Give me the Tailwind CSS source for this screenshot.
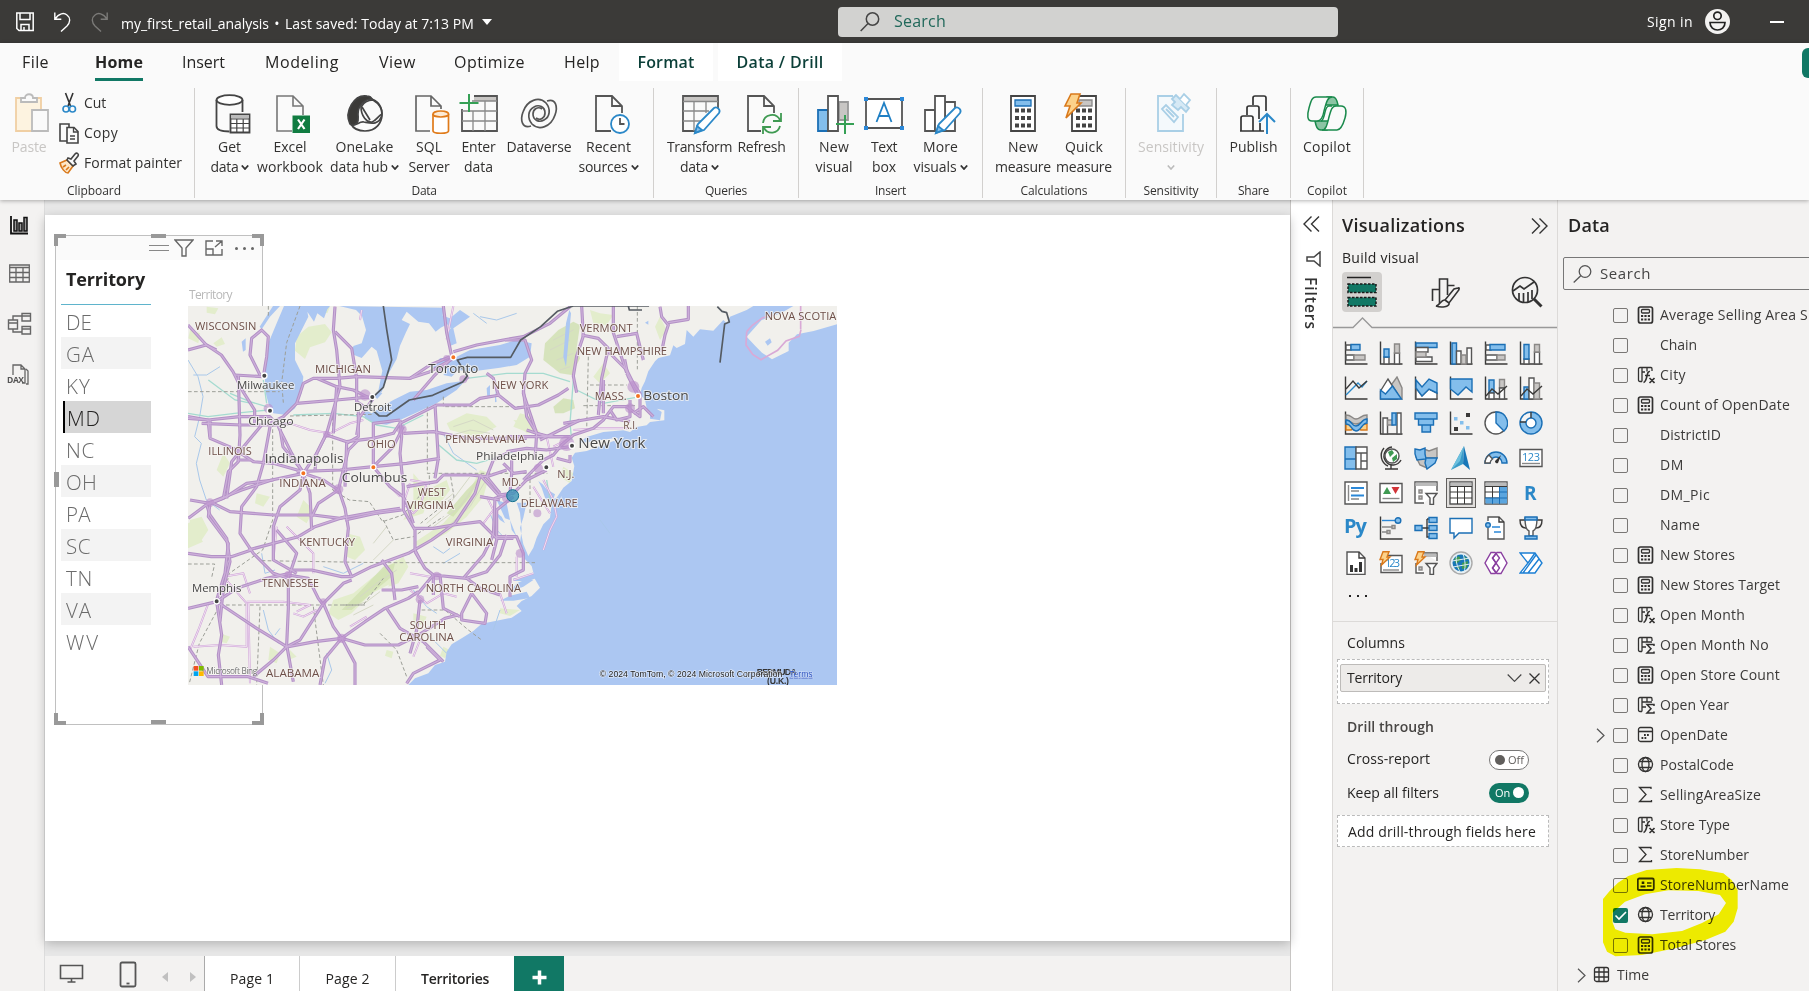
<!DOCTYPE html>
<html lang="en">
<head>
<meta charset="utf-8">
<title>my_first_retail_analysis</title>
<script src="https://cdn.jsdelivr.net/npm/@tailwindcss/browser@4"></script>
</head>
<body class="w-[1809px] h-[991px] overflow-hidden bg-[#f3f2f1] font-['Open_Sans','Noto_Sans',sans-serif] text-[#252423] text-sm whitespace-nowrap flex flex-col">

<!-- Title bar -->
<header class="h-[43px] shrink-0 bg-[#3b3a38] flex items-center text-white">
  <svg class="ml-4 w-[18px] h-[20px]" viewBox="0 0 18 20" fill="none" stroke="#fff" stroke-width="1.5"><path d="M.8 1h16.4v17.5H3L.8 16.5zM4 1v6.500h10V1M5 18.500v-6h8v6M8 15v3.500"/></svg>
  <svg class="ml-5 w-[17px] h-[20px]" viewBox="0 0 17 20" fill="none" stroke="#fff" stroke-width="1.4"><path d="M.8.5v6.700h6.500M1 7C5 1 10 .5 13 3c4 3 3 8 0 11l-6 5.500"/></svg>
  <svg class="ml-5 w-[17px] h-[20px]" viewBox="0 0 17 20" fill="none" stroke="#7b7a78" stroke-width="1.400"><path d="M16.200.5v6.700H9.700M16 7C12 1 7 .5 4 3C0 6 1 11 4 14l6 5.500"/></svg>
  <div class="ml-[13px] mt-1 flex items-center text-[14px]"><span data-w="148">my_first_retail_analysis</span><span class="w-4 text-center">•</span><span data-w="189">Last saved: Today at 7:13 PM</span></div>
  <svg class="ml-2 w-[10px] h-[6px]" viewBox="0 0 10 6"><path d="M0 0h10L5 6z" fill="#fff"/></svg>
  <div class="ml-[346px] w-[500px] h-[30px] rounded-sm bg-[#d2d2d0] flex items-center">
    <svg class="ml-[22px] w-[20px] h-[20px]" viewBox="0 0 20 20" fill="none" stroke="#444" stroke-width="1.500"><circle cx="12.500" cy="7" r="6.200"/><path d="M8 11.500.7 19"/></svg>
    <span class="ml-[14px] text-[16px] text-[#20685a]" data-w="52">Search</span>
  </div>
  <span class="ml-[309px] text-[14px]" data-w="46">Sign in</span>
  <svg class="ml-[12px] w-[25px] h-[25px]" viewBox="0 0 25 25"><circle cx="12.500" cy="12.500" r="12.500" fill="#f3f2f1"/><g fill="none" stroke="#222" stroke-width="1.700"><circle cx="12.500" cy="6.800" r="3.700"/><path d="M5 13.500h15c0 10-15 10-15 0z"/></g></svg>
  <div class="ml-[40px] w-[14px] h-[2px] bg-white"></div>
</header>

<!-- Ribbon -->
<section class="h-[157px] shrink-0 bg-[#fafafa] relative z-10 shadow-[0_1px_4px_rgba(0,0,0,0.3)] flex flex-col">
  <nav class="h-[45px] flex items-start text-[16px]">
    <div class="pl-[22px] w-[95px] h-[38px] leading-[39px]"><span data-w="27">File</span></div>
    <div class="w-[48px] h-[38px] leading-[39px] border-b-[3px] border-[#117865] font-bold"><span data-w="48">Home</span></div>
    <div class="pl-[39px] w-[122px] leading-[39px]"><span data-w="43">Insert</span></div>
    <div class="w-[114px] leading-[39px]"><span data-w="74">Modeling</span></div>
    <div class="w-[75px] leading-[39px]"><span data-w="37">View</span></div>
    <div class="w-[110px] leading-[39px]"><span data-w="71">Optimize</span></div>
    <div class="w-[55px] leading-[39px]"><span data-w="36">Help</span></div>
    <div class="w-[94px] h-[38px] leading-[39px] bg-white text-center font-semibold text-[#0b3f38]"><span data-w="57">Format</span></div>
    <div class="ml-[5px] w-[124px] h-[38px] leading-[39px] bg-white text-center font-semibold text-[#0b3f38]"><span data-w="87">Data / Drill</span></div>
    <div class="ml-auto mt-[5px] w-[7px] h-[30px] bg-[#117865] rounded-l-md"></div>
  </nav>
  <div class="h-[110px] flex text-[14px] leading-[20px] text-[#323130]">
    <!-- Clipboard -->
    <div class="w-[195px] border-r border-[#d2d0ce] flex flex-col">
      <div class="h-[96px] flex">
        <div class="w-[58px] flex flex-col items-center pt-[5px] text-[#c8c6c4]">
          <svg class="w-[40px] h-[44px]" viewBox="0 0 40 44" fill="none" stroke-width="1.800"><path d="M7 5h25v33H7z" stroke="#f0cfa3" fill="#fdf3e0"/><path d="M12 9V5h4c0-5 8-5 8 0h4v4z" stroke="#bbb" fill="#fafafa"/><path d="M23 17h16v21H23z" stroke="#bbb" fill="#fafafa"/></svg>
          <span data-w="35">Paste</span>
        </div>
        <div class="flex flex-col">
          <div class="h-[30px] flex items-center"><svg class="w-[22px] h-[22px]" viewBox="0 0 22 22" fill="none" stroke-width="1.600"><path d="M7.500 1l5 13M15 1l-5 13" stroke="#333"/><g stroke="#2b88c8"><circle cx="8" cy="17" r="3"/><circle cx="14.500" cy="17" r="3"/></g></svg><span class="ml-1" data-w="22">Cut</span></div>
          <div class="h-[30px] flex items-center"><svg class="w-[22px] h-[22px]" viewBox="0 0 22 22" fill="none" stroke="#444" stroke-width="1.600"><path d="M9 19H2V2h9v3"/><path d="M9 5.500h7l4 4V21H9z" fill="#fafafa"/><path d="M15.500 5.500V10H20M12 14h5M12 17h5" stroke-width="1.300"/></svg><span class="ml-1" data-w="34">Copy</span></div>
          <div class="h-[30px] flex items-center"><svg class="w-[22px] h-[22px]" viewBox="0 0 22 22" fill="none" stroke-width="1.600"><path d="M2 11l7-3 6 6-5 7c-3 0-7-5-8-10z" stroke="#d9791b" fill="#fde7c8"/><path d="M5 15l3-2M8 18l3-3" stroke="#d9791b"/><path d="M9 8l6 6 3-2-2-3 4-5c1-2-1-4-3-2l-4 5-3-1z" stroke="#444" fill="#fafafa"/></svg><span class="ml-1" data-w="98">Format painter</span></div>
        </div>
      </div>
      <span class="pl-[67px] text-[12px] leading-[14px]"><span data-w="54">Clipboard</span></span>
    </div>
    <!-- Data -->
    <div class="w-[459px] border-r border-[#d2d0ce] flex flex-col items-center">
      <div class="h-[96px] w-full pl-[4px] flex pt-[5px]">
        <div class="w-[61px] flex flex-col items-center">
          <svg class="w-10 h-[44px] overflow-visible" viewBox="0 0 40 44" fill="none" stroke="#444" stroke-width="1.800"><ellipse cx="19.500" cy="7" rx="13" ry="4.800" fill="#fff"/><path d="M6.500 7v26c0 4 6 5.500 13 5.500M32.500 7v12"/><path d="M20.500 21.500h19v18h-19z" fill="#fff"/><path d="M21 22h18v3.500H21z" fill="#bbb" stroke="none"/><path d="M20.500 26h19M20.500 30.500h19M20.500 35h19M26.800 26v13.500M33.200 26v13.500" stroke-width="1.200"/></svg>
          <span data-w="23">Get</span><span class="flex items-center gap-[2px]"><span data-w="28">data</span><svg class="w-2 h-[5px]" viewBox="0 0 8 5"><path d="M.8.5 4 4 7.200.5" fill="none" stroke="#333" stroke-width="1.800"/></svg></span>
        </div>
        <div class="w-[60px] flex flex-col items-center">
          <svg class="w-10 h-[44px] overflow-visible" viewBox="0 0 40 44" fill="none" stroke="#777" stroke-width="1.600"><path d="M22 38H7V3h16l10 10v9M23 3v10h10" /><path d="M22.500 22.500h17.500v17.500H22.500z" fill="#107c41" stroke="none"/><path d="M28 26.500l6.500 9.500M34.500 26.500L28 36" stroke="#fff" stroke-width="2.200"/></svg>
          <span data-w="33">Excel</span><span data-w="66">workbook</span>
        </div>
        <div class="w-[89px] flex flex-col items-center">
          <svg class="w-10 h-[44px] overflow-visible" viewBox="0 0 40 44" fill="none" stroke="#444" stroke-width="1.700"><path d="M20.500 5C31 5 37 12 37 21s-6 17-17 17C12 38 8 35 6 31" fill="#fafafa"/><path d="M16 14C20 7 26 7 28 7c5 3 9 8 9 14-4 2-6 7-10 8-5 1-11-6-11-15z"/><path d="M17 14l8 13M6 32c6 1 8-4 13-3 6 1 15 4 18-7"/><path d="M5 31C-1 19 9 1 22 3c2 0 4 1 5 3-8 0-14 7-14 15 0 4 1 6-1 9-2 2-5 3-7 1z" fill="#3b3a38"/></svg>
          <span data-w="58">OneLake</span><span class="flex items-center gap-[3px]"><span data-w="58">data hub</span><svg class="w-2 h-[5px]" viewBox="0 0 8 5"><path d="M.8.5 4 4 7.200.5" fill="none" stroke="#333" stroke-width="1.800"/></svg></span>
        </div>
        <div class="w-[40px] flex flex-col items-center">
          <svg class="w-10 h-[44px] overflow-visible" viewBox="0 0 40 44" fill="none" stroke="#666" stroke-width="1.700"><path d="M21 38H7V3h15l10 10v3M22 3v10h10"/><g stroke="#e07b1a"><path d="M24 21v17c0 3 15.500 3 15.500 0V21" fill="#fff"/><ellipse cx="31.800" cy="21" rx="7.800" ry="3" fill="#fdebd5"/></g></svg>
          <span data-w="26">SQL</span><span data-w="41">Server</span>
        </div>
        <div class="w-[59px] flex flex-col items-center">
          <svg class="w-10 h-[44px] overflow-visible" viewBox="0 0 40 44" fill="none" stroke="#555" stroke-width="1.800"><path d="M3 16v22h35V3H15"/><path d="M15 4h22v4H15z" fill="#c8c6c4" stroke="none"/><path d="M13 8h25M3 18h35M3 28h35M14 18v20M26 8v30" stroke="#888" stroke-width="1.300"/><path d="M10 1v18M.5 10h19" stroke="#35a055" stroke-width="2"/></svg>
          <span data-w="34">Enter</span><span data-w="29">data</span>
        </div>
        <div class="w-[62px] flex flex-col items-center">
          <svg class="w-10 h-[44px] overflow-visible" viewBox="0 0 40 44" fill="none" stroke="#555" stroke-width="1.700"><path d="M12 33C3 36 1 27 4 19 8 7 20 3 27 10c5 6 4 14-2 17-5 3-11 0-11-6 0-5 5-8 9-5"/><path d="M28 8c9-3 11 6 8 14-4 12-16 16-23 9-5-6-4-14 2-17 5-3 11 0 11 6 0 5-5 8-9 5"/></svg>
          <span data-w="65">Dataverse</span>
        </div>
        <div class="w-[77px] flex flex-col items-center">
          <svg class="w-10 h-[44px] overflow-visible" viewBox="0 0 40 44" fill="none" stroke="#555" stroke-width="1.800"><path d="M22 38H7V3h16l10 10v7M23 3v10h10"/><circle cx="31" cy="31" r="9" fill="#fff" stroke="#2b88c8"/><path d="M31 25v6h4.500"/></svg>
          <span data-w="45">Recent</span><span class="flex items-center gap-[3px]"><span data-w="49">sources</span><svg class="w-2 h-[5px]" viewBox="0 0 8 5"><path d="M.8.5 4 4 7.200.5" fill="none" stroke="#333" stroke-width="1.800"/></svg></span>
        </div>
      </div>
      <span class="text-[12px] leading-[14px]" data-w="25">Data</span>
    </div>
    <!-- Queries -->
    <div class="w-[145px] border-r border-[#d2d0ce] flex flex-col items-center">
      <div class="h-[96px] w-full pl-[12px] flex pt-[5px]">
        <div class="w-[67px] flex flex-col items-center">
          <svg class="w-10 h-[44px] overflow-visible" viewBox="0 0 40 44" fill="none" stroke="#555" stroke-width="1.800"><path d="M15 38H3V3h35v12"/><path d="M4 4h33v4H4z" fill="#c8c6c4" stroke="none"/><path d="M3 8.500h35M3 18h26M3 28h18M14 8v30M26 8v12" stroke="#888" stroke-width="1.300"/><path d="M15 40l3-9 16-16c3-2 7 2 5 5L24 37z" fill="#fff" stroke="#2b88c8"/><path d="M15 40l2-7 5 4z" fill="#83beec" stroke="#2b88c8"/></svg>
          <span data-w="65">Transform</span><span class="flex items-center gap-[3px]"><span data-w="28">data</span><svg class="w-2 h-[5px]" viewBox="0 0 8 5"><path d="M.8.5 4 4 7.200.5" fill="none" stroke="#333" stroke-width="1.800"/></svg></span>
        </div>
        <div class="w-[57px] flex flex-col items-center">
          <svg class="w-10 h-[44px] overflow-visible" viewBox="0 0 40 44" fill="none" stroke="#555" stroke-width="1.800"><path d="M19 38H6V3h16l10 10v7M22 3v10h10"/><path d="M21 30c1-9 13-11 17-3M39 20v8h-8M38 33c-2 8-12 9-16 2M21 41v-7h8" stroke="#3f9a52"/></svg>
          <span data-w="48">Refresh</span>
        </div>
      </div>
      <span class="text-[12px] leading-[14px]" data-w="42">Queries</span>
    </div>
    <!-- Insert -->
    <div class="w-[184px] border-r border-[#d2d0ce] flex flex-col items-center">
      <div class="h-[96px] w-full pl-[8px] flex pt-[5px]">
        <div class="w-[54px] flex flex-col items-center">
          <svg class="w-10 h-[44px] overflow-visible" viewBox="0 0 40 44" fill="none" stroke="#555" stroke-width="1.800"><path d="M25 9h9v18h-9z" fill="#c8c6c4" stroke="#999"/><path d="M4 17h10v21H4z" fill="#83beec" stroke="#1b6fb5"/><path d="M14 3h10v35H14z" fill="#fff"/><path d="M31 22v19M22 31h18" stroke="#35a055" stroke-width="2"/></svg>
          <span data-w="30">New</span><span data-w="37">visual</span>
        </div>
        <div class="w-[46px] flex flex-col items-center">
          <svg class="w-10 h-[44px] overflow-visible" viewBox="0 0 40 44" fill="none" stroke="#555" stroke-width="1.800"><path d="M2 6h36v29H2z" fill="#fff"/><path d="M12.500 29 20 10l7.500 19M15 23h10" stroke="#1f7fc4"/><path d="M0 4h4v4H0zM36 4h4v4h-4zM0 33h4v4H0zM36 33h4v4h-4z" fill="#2b88d8" stroke="none"/></svg>
          <span data-w="26">Text</span><span data-w="24">box</span>
        </div>
        <div class="w-[67px] flex flex-col items-center">
          <svg class="w-10 h-[44px] overflow-visible" viewBox="0 0 40 44" fill="none" stroke="#555" stroke-width="1.800"><path d="M4 17h10v21H4zM24 9h10v29H24z" fill="#fff"/><path d="M14 3h10v35H14z" fill="#fff"/><path d="M15 40l3-9 16-16c3-2 7 2 5 5L24 37z" fill="#fff" stroke="#2b88c8"/><path d="M15 40l2-7 5 4z" fill="#83beec" stroke="#2b88c8"/></svg>
          <span data-w="35">More</span><span class="flex items-center gap-[3px]"><span data-w="43">visuals</span><svg class="w-2 h-[5px]" viewBox="0 0 8 5"><path d="M.8.5 4 4 7.200.5" fill="none" stroke="#333" stroke-width="1.800"/></svg></span>
        </div>
      </div>
      <span class="text-[12px] leading-[14px]" data-w="31">Insert</span>
    </div>
    <!-- Calculations -->
    <div class="w-[143px] border-r border-[#d2d0ce] flex flex-col items-center">
      <div class="h-[96px] w-full pl-[10px] flex pt-[5px]">
        <div class="w-[60px] flex flex-col items-center">
          <svg class="w-10 h-[44px] overflow-visible" viewBox="0 0 40 44" fill="none" stroke="#444" stroke-width="1.800"><path d="M8 3h24v35H8z" fill="#fff"/><path d="M12 7h16v6H12z" fill="#83beec" stroke="#1b6fb5" stroke-width="1.300"/><path d="M12 17.500h16M12 25h16M12 32.500h16" stroke-width="4" stroke-dasharray="4 2"/></svg>
          <span data-w="30">New</span><span data-w="56">measure</span>
        </div>
        <div class="w-[62px] flex flex-col items-center">
          <svg class="w-10 h-[44px] overflow-visible" viewBox="0 0 40 44" fill="none" stroke="#444" stroke-width="1.800"><path d="M8 3h24v35H8z" fill="#fff"/><path d="M15 7h13v6H15z" fill="#c8c6c4" stroke="#888" stroke-width="1.300"/><path d="M12 17.500h16M12 25h16M12 32.500h16" stroke-width="4" stroke-dasharray="4 2"/><path d="M7 1h9l-3 9h4L2 25l4-12H1z" fill="#fcd28a" stroke="#d9791b" stroke-width="1.600"/></svg>
          <span data-w="38">Quick</span><span data-w="56">measure</span>
        </div>
      </div>
      <span class="text-[12px] leading-[14px]" data-w="67">Calculations</span>
    </div>
    <!-- Sensitivity -->
    <div class="w-[91px] border-r border-[#d2d0ce] flex flex-col items-center">
      <div class="h-[96px] flex flex-col items-center pt-[5px] text-[#c8c6c4]">
        <svg class="w-10 h-[44px] overflow-visible" viewBox="0 0 40 44" fill="none" stroke="#a9cfe6" stroke-width="1.800"><path d="M22 3H7v35h25V21" fill="#f4f9fc"/><path d="M11 16l4-4 12 12-4 5zM15 16l8 8"/><path d="M21 6l4-4 13 13-3 4-5-5-3 3-6-5 3-3z" fill="#d6e9f5"/><path d="M29 6l4-5 6 6-4 5" fill="#fff"/></svg>
        <span data-w="66">Sensitivity</span>
        <svg class="mt-[8px] w-2 h-[5px]" viewBox="0 0 8 5"><path d="M.8.5 4 4 7.200.5" fill="none" stroke="#bbb" stroke-width="1.600"/></svg>
      </div>
      <span class="text-[12px] leading-[14px]" data-w="55">Sensitivity</span>
    </div>
    <!-- Share -->
    <div class="w-[74px] border-r border-[#d2d0ce] flex flex-col items-center">
      <div class="h-[96px] flex flex-col items-center pt-[5px]">
        <svg class="w-10 h-[44px] overflow-visible" viewBox="0 0 40 44" fill="none" stroke="#333" stroke-width="1.700"><path d="M19 12V5c0-1.500.5-2 2-2h9c1.500 0 2 .5 2 2v13M13 22v-7c0-1.500.5-2 2-2h8c1.500 0 2 .5 2 2v11M7 38V25c0-1.500.5-2 2-2h8c1.500 0 2 .5 2 2v13M6 38h24M26 30v8"/><path d="M33 41V22M25 29l8-8 8 8" stroke="#2b88c8" stroke-width="2"/></svg>
        <span data-w="48">Publish</span>
      </div>
      <span class="text-[12px] leading-[14px]" data-w="31">Share</span>
    </div>
    <!-- Copilot -->
    <div class="w-[73px] border-r border-[#d2d0ce] flex flex-col items-center">
      <div class="h-[96px] flex flex-col items-center pt-[5px]">
        <svg class="w-10 h-[44px] overflow-visible" viewBox="0 0 40 44" fill="#fafafa" stroke="#1a8a4c" stroke-width="1.500"><path d="M20 4h6c3 0 4 3 5 8H18z" fill="#8cc4a4"/><path d="M20 37h-6c-4 0-5-4-6-9h13z" fill="#8cc4a4"/><path d="M9 4h16c-5 0-6 7-8 14-1 6-3 10-7 10H5c-5 0-5-6-3-13S5 4 9 4z"/><path d="M30 37H15c4 0 5-5 7-13 2-7 3-11 7-11h5c5 0 6 5 4 12s-4 12-8 12z"/><path d="M25 13h-3c-2 0-3 2-4 6-1 5-2 9-4 9"/></svg>
        <span data-w="48">Copilot</span>
      </div>
      <span class="text-[12px] leading-[14px]" data-w="40">Copilot</span>
    </div>
  </div>
</section>

<!-- Workspace -->
<main class="flex h-[791px] shrink-0">
  <!-- View switcher -->
  <aside class="w-[45px] shrink-0 border-r border-[#dcdcdc] pt-[15px] pl-[5px] flex flex-col">
    <svg class="w-[26px] h-[21px]" viewBox="0 0 26 21" fill="none" stroke="#111" stroke-width="1.500"><path d="M6 1v17.500h17" stroke-width="1.800"/><path d="M9 5h3v11H9zM14 8h3v8h-3zM19 2.500h3V16h-3z" fill="#999"/></svg>
    <svg class="mt-[27px] w-[26px] h-[21px]" viewBox="0 0 26 21" fill="none" stroke="#666" stroke-width="1.300"><path d="M4.700 2h19.600v17H4.700zM4.700 4.500h19.600M4.700 9.500h19.600M4.700 14.500h19.600M11 4.500V19M18 4.500V19"/></svg>
    <svg class="mt-[27px] w-[27px] h-[26px]" viewBox="0 0 27 26" fill="none" stroke="#666" stroke-width="1.400"><path d="M3.500 9h9v9h-9zM3.500 12h9M17 2.500h8.500v7.500H17zM17 5h8.500M17 15.500h8.500V23H17zM17 18h8.500M8 9V5h9M8 18v3h9"/></svg>
    <svg class="mt-[26px] w-[27px] h-[24px]" viewBox="0 0 27 24" fill="none" stroke="#666" stroke-width="1.300"><path d="M8 12V2h8l4 4v14h-3M16 2v4h4M21 6l2 2v13h-2"/><text x="2" y="20" font-size="8.500" font-weight="bold" fill="#555" stroke="none" textLength="17">DAX</text></svg>
  </aside>

  <div class="w-[1245px] shrink-0 flex flex-col bg-[#e7e7e7]">
    <!-- Report page -->
    <div class="mt-[15px] h-[726px] bg-white shadow-[0_3px_10px_rgba(0,0,0,0.22)] relative">
      <!-- Selected table visual -->
      <div class="absolute left-[10px] top-[20px] w-[208px] h-[490px] border border-[#c0c0c0] flex flex-col">
        <div class="h-[24px] bg-[#fafafa] flex items-center pl-[93px]">
          <div class="w-5 h-[6px] border-y border-[#888]"></div>
          <svg class="ml-[5px] w-5 h-[18px]" viewBox="0 0 20 18" fill="none" stroke="#666" stroke-width="1.400"><path d="M1 1h18l-7 8v8H8V9z"/></svg>
          <svg class="ml-[11px] w-[18px] h-[16px]" viewBox="0 0 18 16" fill="none" stroke="#666" stroke-width="1.400"><path d="M8 1H1v14h16V9M1 9h7v6M11 1h6v5M17 1l-7 6"/></svg>
          <div class="ml-[12px] flex gap-[5px]"><i class="size-[3px] rounded-full bg-[#666]"></i><i class="size-[3px] rounded-full bg-[#666]"></i><i class="size-[3px] rounded-full bg-[#666]"></i></div>
        </div>
        <div class="ml-[5px] w-[90px] flex flex-col">
          <div class="h-[45px] border-b border-[#5fb4cc] pl-[5px] pt-[4px] text-[18px] leading-[30px] font-bold"><span data-w="79">Territory</span></div>
          <div id="rows" class="flex flex-col text-[20.500px] text-[#6b6b6b]"></div>
        </div>
      </div>
      <!-- Map visual -->
      <div class="absolute left-[143px] top-[72px] w-[649px]">
        <div class="h-[19px] text-[12px] leading-[15px] text-[#b8b8b8] pl-[1px]"><span data-w="43">Territory</span></div>
        <svg class="block w-[649px] h-[379px]" viewBox="24 78 1947 1137" id="map" fill="none">
          <rect x="24" y="78" width="1947" height="1137" fill="#f1f0ec"/>
          <g fill="#e3edcc">
            <path d="M350 170l35-30 50-8 20 25-20 30-45 15-15 35-30-25z"/><path d="M100 190l25-18 10 20-25 8zM420 80h30l-8 20-18-5zM30 720l35-10 20 40-20 30-40 10zM30 150l30 10-5 30-30-15z"/><path d="M500 760l40 10 15 40-30 30-25-10zM700 580l50 60-20 60-60 20 30-60zM800 430l60-30 60 10 30 30-60 30-80-20zM370 660l30 30-20 40-30-20z"/><path d="M900 570l30 10-20 70-50 60-60 50-80 40-20-10 90-60 70-80z"/><path d="M460 960l60-20 60-50 70-50 15 20-30 50-60 30-60 60-40 20-30-20zM130 520l20 30-20 40-20-20zM270 1100l30 20-10 30-25-10zM790 1100l20 10-15 25-15-8z"/>
            <path d="M1020 400l40 10-10 50-50-20zM1150 560l30 20-10 30-30-20zM960 985l60 5-30 18-30-8zM1240 290l30-40 20 30-30 30z"/>
            <path d="M24 730l40-15 15 30-30 10 20 30-45 20zM80 80l35 5-10 18-25-5zM760 620l40-20 10 30-30 40-40 0zM640 850l30-20 15 30-30 50-30 10zM700 1000l40 10-10 25-30-5zM330 1110l20 20-25 10zM620 1110l20 5-5 20-20-8zM1440 110l20 40-20 30-15-40zM1000 420l50 5 30 30-40 5zM1230 90l30 10 40 5-20 30-40-5zM230 640l40 10-20 30-25-10zM120 1060l30 10-10 20-20-5z"/>
          </g>
          <path fill="#cfe0b0" d="M1095 190l40-40 45-25 20 10-10 70 10 30-25 50-35-5-50-40zM1120 380l30-25 30 5 5 25-35 15-25 0zM900 590l-30 60-50 60-20-10 60-70zM610 860l35-10-10 40-60 50-60 50-30 0 50-50z" opacity=".8"/>
          <g stroke="#d5d8c6" stroke-width="3"><path d="M930 580l-60 100-90 80M890 610l-50 70-80 60M870 590l-60 80-70 60M820 640l-60 50M540 950l50-40 60-40M500 985l60-20 40-30M520 1005l60-30M820 440l60-20 60 30M800 470l70-20 60 10M1120 180l60-30M1110 210l60-30M1130 240l50-20M1140 270l30-10M640 780l-60 60M620 740l-40 50"/></g>
          <g fill="#acc7f2">
            <!-- Atlantic -->
            <path d="M1720 78l-20 12-50 20-10 20-10-10-30 32-40-4-20 22-20-20-5 42-25 12-10-8-10 30-35 8-10 10-20 30-10 30-10 20-5 20 15 15 5 25 10 20v12l30 5 5-25-15-10 23 5v30l-43 5-10 10-30 5-20 15-20-5-60 5-50 15-20 15 10 2 100-15 5 5-95 35-35 5-10 15 8 25-8 45-25 20-20 30-10 5 5-15-25-15-12-15-13-10 10 20 10 30 20 20-5 40-20 20-20 40-10 30-15 25-15-35-10-50 10-30 10-45-30 0 10 30 5 50-5 40 15 50 20 20 10 40 15 25-25 25-30 15-15 15 15 15-30 20-90 18-25 22-35 22-30 18-15 22-5 30-30 10-20 25-40 15-20 20-20 15H2000V78z"/>
            <path d="M1040 935l-50 12-30 15 40 0 50-8zM1060 880l-40 15-20 0 0 8 40 0 30-8zM940 690l25 20 10 20-15-10zM1395 128l10-6v12z"/>
            <!-- Michigan and Green Bay -->
            <path d="M312 78l-22 52-25 60-10 60v80l10 40 15 30 40 5 25-20 20-45 5-50-25-50v-50l20-40 20-40-3-15 20 30 10-25 20 15 10-27 8-10z"/><path d="M300 78l-30 32-25 38-6-8 26-40 14-22zM185 185l12-10v35l-8 5z"/>
            <!-- Huron -->
            <path d="M478 78l50 12 18 18 12 42-13 40-25 8-5 24 30 12 30-34 15 12 17 60-12 60 10 5 20-55 25-45 10-40 18-40 12-25-25-12 15-25 35 30 32 5 20 25 15-12 20-10 10 12-12 18 10 35 20-8-10-45 50-35-30-20-30 25-22-8 2-24z"/>
            <!-- Erie -->
            <path d="M548 385l27 15 30-20 35-20 50-25 50-5 60-20 55-8-25 28-60 40-65 30-45 20-40 14-40-4-25-15zM580 350l15-18 12 8-15 16z"/>
            <!-- Ontario -->
            <path d="M755 265l25-30 50-5 40-20 90-15 50-15 45 10-5 40-40 25-50 8-90 12-35-5-20 20-25-5 12-15z"/><path d="M1150 230l8-100 10-40 5 10-10 110-5 50zM920 325l10-10v35l-8 5zM945 330l5 35-5 2z"/>
            <path d="M1010 910l35-15 15 5-30 20-40 15zM950 660l30 10 10 50-15-5zM990 720l20 50-15-20z"/>
          </g>
          <!-- Nova Scotia -->
          <path fill="#f1f0ec" d="M1700 170l45-50 60-22 35-20h131v55l-70 20-50 10-25 25 0 25-50 25-30-20-20-20z"/><path d="M1755 185l15-10 5 12-12 10z" fill="#acc7f2"/>
          <path d="M1700 155l18-20 30-22 30-8M1700 155l-2 40 20 28 25 16 50-28 25-28 40-14 5-20M1862 148l0-70" stroke="#d9a9d6" stroke-width="5"/>
          <!-- rivers -->
          <g stroke="#a9c8ea" stroke-width="3"><path d="M24 240l30 50 15 60-10 60-15 60 20 20-15 60 10 50 20 60 40 30M430 860l60 20 60-30M245 820l10 60 30-10M250 990l15 60 30 40M440 1120l15 50-20 40M700 930l40 50 30 20M120 260l-40 25-40 0M790 850l50-30M760 800l30 20 20-15M300 1045l-15 20M930 700l20 50 30 30M890 570l-70-50-30-60M1290 760l-30-40M740 1060l60 60M1010 100l-60 20-50-10M880 100l40 30M960 990l-20 60"/></g>
          <g stroke="#a5dbd0" stroke-width="4"><path d="M24 400l60 10 80-10 100-10M150 340l60 25 50 15M85 300l80 60 50 10M250 300l10 70M340 405l120-5 90 10 40 25 60 10 80-40M860 295l120-15 110 0 80 25M1180 300l-10 130 5 50M1190 330l80 40 110-20M770 490l60 50 60 10 70-20 50-20M1100 600l10 60"/></g>
          <!-- state lines -->
          <g stroke="#9d9f98" stroke-width="3" stroke-dasharray="11 7"><path d="M24 335h275M360 78l-40 110-15 120 5 60M278 430v290l-30 90-100 70-20 80-70 130-30 120M458 410v220l50 30 60 5 40 60 60-20 80-90 0-30M742 380v200h360M790 350v30h175l60 0M330 408l250-5M24 852h80l-10 45M245 842l360 6h460M120 975h430l60-80M240 980l-10 235M400 980l30 235M490 975l70 0M725 990h70l70 60 40 30M600 1060l50 50 30 80M1225 230l-5 220M1210 377h160M1230 315h110M1372 78v190M812 590l10 60-100 80M1050 580v120M610 720l30 60 60-10 90-60M265 78v30"/></g>
          <!-- roads -->
          <g id="roads" stroke-linejoin="round"></g>
          <!-- national border -->
          <g stroke="#555b62" stroke-width="5" stroke-linejoin="round"><path d="M610 78l10 70 15 92-25 82-32 30-10 30 30 26h22l68-48 70-14 90-40 14-18-30-48 30-8h130l30-52 60-40 50-46 48-16h225l5-26M1345 78l3 12h38M1612 80l14 14 14 4 8 28-14 6-14 116"/></g>
          <g stroke="#fff" stroke-width="4"><circle cx="253" cy="287" r="8" fill="#444"/><circle cx="270" cy="392" r="8" fill="#444"/><circle cx="577" cy="351" r="8" fill="#444"/><circle cx="110" cy="964" r="8" fill="#444"/><circle cx="1176" cy="497" r="8" fill="#444"/><circle cx="1099" cy="562" r="8" fill="#444"/><circle cx="820" cy="232" r="8" fill="#f47321"/><circle cx="370" cy="580" r="8" fill="#f47321"/><circle cx="580" cy="562" r="8" fill="#f47321"/><circle cx="1374" cy="348" r="8" fill="#f47321"/></g>
          <g id="labels" font-size="35" fill="#6e5049" stroke="#f6f4f2" stroke-width="6" stroke-opacity=".75" paint-order="stroke"></g>
          <circle cx="998" cy="647" r="18" fill="#3b93b8" fill-opacity=".8" stroke="#16718f" stroke-width="3"/>
          <path d="M41 1158h14v14H41z" fill="#f25022"/><path d="M57 1158h14v14H57z" fill="#7fba00"/><path d="M41 1174h14v14H41z" fill="#00a4ef"/><path d="M57 1174h14v14H57z" fill="#ffb900"/>
          <text x="79" y="1182" font-size="25" textLength="153" fill="#6f6f6f" stroke="#fff" stroke-width="3" stroke-opacity=".6" paint-order="stroke">Microsoft Bing</text>
          <g font-family="Liberation Sans" font-size="26"><text x="1730" y="1185" font-weight="bold" fill="#333" textLength="120">BERMUDA</text><text x="1761" y="1212" font-weight="bold" fill="#333" textLength="66">(U.K.)</text><text x="1259" y="1190" fill="#222" stroke="#fff" stroke-width="4" stroke-opacity=".6" paint-order="stroke" textLength="548">© 2024 TomTom, © 2024 Microsoft Corporation</text><text x="1828" y="1190" fill="#2a50c0" text-decoration="underline" stroke="#fff" stroke-width="3" stroke-opacity=".5" paint-order="stroke" textLength="70">Terms</text></g>
        </svg>
      </div>
      <!-- Selection handles -->
      <div class="absolute left-[9px] top-[19px] size-3 border-t-4 border-l-4 border-[#999]"></div>
      <div class="absolute left-[207px] top-[19px] size-3 border-t-4 border-r-4 border-[#999]"></div>
      <div class="absolute left-[9px] top-[498px] size-3 border-b-4 border-l-4 border-[#999]"></div>
      <div class="absolute left-[207px] top-[498px] size-3 border-b-4 border-r-4 border-[#999]"></div>
      <div class="absolute left-[106px] top-[19px] w-[15px] h-1 bg-[#999]"></div>
      <div class="absolute left-[106px] top-[505px] w-[15px] h-1 bg-[#999]"></div>
      <div class="absolute left-[9px] top-[257px] w-[5px] h-[15px] bg-[#999]"></div>
    </div>
    <!-- Page tabs -->
    <div class="mt-[15px] h-[35px] bg-[#f3f2f1] flex text-[14px] leading-[45px]">
      <svg class="ml-[14px] mt-[8px] w-[25px] h-[20px]" viewBox="0 0 25 20" fill="none" stroke="#555" stroke-width="1.600"><path d="M1.500 1.500h22v13h-22zM12.500 14.500V18M8.500 18h8"/></svg>
      <svg class="ml-[35px] mt-[5px] w-[18px] h-[27px]" viewBox="0 0 18 27" fill="none" stroke="#555" stroke-width="1.800"><rect x="1.500" y="1.500" width="15" height="24" rx="1.500"/><path d="M7.500 22.500h3"/></svg>
      <svg class="ml-[25px] mt-[16px] w-[6px] h-[10px]" viewBox="0 0 6 10"><path d="M6 0v10L0 5z" fill="#c0c0c0"/></svg>
      <svg class="ml-[22px] mt-[16px] w-[6px] h-[10px]" viewBox="0 0 6 10"><path d="M0 0v10l6-5z" fill="#c0c0c0"/></svg>
      <div class="ml-[8px] w-[95px] bg-white border-l border-[#aaa] text-center"><span data-w="44">Page 1</span></div>
      <div class="w-[96px] bg-white border-l border-[#ccc] text-center"><span data-w="44">Page 2</span></div>
      <div class="w-[119px] bg-white border-l border-[#ccc] text-center font-semibold"><span data-w="68">Territories</span></div>
      <div class="w-[50px] bg-[#117865] flex items-center justify-center"><svg class="mt-[7px] size-[15px]" viewBox="0 0 15 15"><path d="M7.500.5v14M.5 7.500h14" stroke="#fff" stroke-width="3.500"/></svg></div>
    </div>
  </div>

  <!-- Filters (collapsed) -->
  <div class="w-[42px] shrink-0 bg-white border-l border-[#c8c6c4] flex flex-col items-center pt-[16px]">
    <svg class="w-[17px] h-[16px]" viewBox="0 0 17 16" fill="none" stroke="#333" stroke-width="1.400"><path d="M8.500.5 1 8l7.500 7.500M16 .5 8.500 8l7.500 7.500"/></svg>
    <svg class="mt-[19px] ml-[4px] w-[15px] h-[16px]" viewBox="0 0 15 16" fill="none" stroke="#444" stroke-width="1.500"><path d="M14 1v14L8 10H1V6h7z"/></svg>
    <div class="mt-[10px] -ml-[2px] [writing-mode:vertical-rl] text-[15.500px] leading-[20px] font-semibold text-[#333]"><span data-w="53">Filters</span></div>
  </div>

  <!-- Visualizations -->
  <section class="w-[226px] shrink-0 border-x border-[#dcdad8] flex flex-col">
    <div class="h-[44px] pt-[7px] pl-[9px] pr-[9px] flex items-center justify-between"><span class="text-[18px] font-semibold" data-w="123">Visualizations</span>
      <svg class="w-[17px] h-[16px]" viewBox="0 0 17 16" fill="none" stroke="#333" stroke-width="1.400"><path d="M1 .5 8.500 8 1 15.500M8.500.5 16 8l-7.500 7.500"/></svg></div>
    <div class="h-[28px] pl-[9px] leading-[27px] font-medium"><span data-w="77">Build visual</span></div>
    <div class="flex h-[40px] pl-[9px]">
      <div class="w-10 bg-[#d2d0ce] rounded-sm"><svg class="size-10" viewBox="0 0 40 40"><path d="M5 5.500h24" stroke="#222" stroke-width="1.500"/><path d="M6 12h28v8.500H6zM6 25.500h28V34H6z" fill="#117865" stroke="#1a1a1a" stroke-width="1.500" stroke-dasharray="2.500 1.500"/></svg></div>
      <svg class="ml-[49px] mt-[5px] w-[29px] h-[32px]" viewBox="0 0 29 32" fill="none" stroke="#333" stroke-width="1.600"><path d="M1.500 24V12.500h7V28M8.500 12.500V2h8v16M16.500 8.500h7"/><path d="M27 11c2-1 1 2 0 3l-9 12-4-3 9-11zM14 23c-4-1-5 6-9 6 5 2 14 1 13-3z" fill="#f3f2f1"/></svg>
      <svg class="ml-[51px] mt-[4px] w-[32px] h-[32px]" viewBox="0 0 32 32" fill="none" stroke="#333" stroke-width="1.700"><circle cx="14" cy="14" r="12.500"/><path d="M2 15l7-5 4 3 10-7M8 25v-8M12.500 26v-9M17 26V16M21 23v-9"/><path d="M23 23l7.500 7.500" stroke-width="3"/></svg>
    </div>
    <svg class="w-[224px] h-[17px]" viewBox="0 0 224 17" fill="none" stroke="#999" stroke-width="1.300"><path d="M0 15.500h20L29.500 6l9.500 9.500h185"/></svg>
    <div id="viz" class="pt-[8px] pl-[7px] grid grid-cols-[repeat(6,35px)] auto-rows-[35px]"></div>
    <div class="h-[40px] pl-[16px] pt-[13px] flex gap-[6px] border-b border-[#dcdad8]"><i class="size-[2px] bg-[#222]"></i><i class="size-[2px] bg-[#222]"></i><i class="size-[2px] bg-[#222]"></i></div>
    <div class="pl-[14px] h-[37px] leading-[41px]"><span data-w="58">Columns</span></div>
    <div class="ml-[4px] w-[212px] h-[45px] bg-white border border-dashed border-[#bbb] px-[2px] pt-[4px]">
      <div class="h-[28px] bg-[#edebe9] border border-[#bdbbb9] rounded-xs flex items-center pl-[6px]"><span data-w="55">Territory</span>
        <svg class="ml-auto w-[15px] h-[8px]" viewBox="0 0 15 8" fill="none" stroke="#444" stroke-width="1.200"><path d="M.7.5l6.800 6.800L14.300.5"/></svg>
        <svg class="ml-[7px] mr-[5px] w-[11px] h-[11px]" viewBox="0 0 11 11" stroke="#333" stroke-width="1.300"><path d="M.5.5l10 10M10.500.5l-10 10"/></svg></div>
    </div>
    <div class="pl-[14px] h-[39px] leading-[46px] font-semibold text-[#484644]"><span data-w="87">Drill through</span></div>
    <div class="pl-[14px] h-[33px] flex items-center"><span data-w="83" class="-mt-[2px]">Cross-report</span><div class="ml-auto mr-[28px] w-[40px] h-[20px] rounded-full border border-[#777] bg-white flex items-center pl-[5px] text-[11px] text-[#605e5c]"><i class="size-[10px] rounded-full bg-[#605e5c] mr-[3px]"></i><span data-w="16">Off</span></div></div>
    <div class="pl-[14px] h-[33px] flex items-center"><span data-w="92">Keep all filters</span><div class="ml-auto mr-[28px] w-[40px] h-[20px] rounded-full bg-[#117865] flex items-center pl-[6px] text-[11px] text-white"><span data-w="15">On</span><i class="size-[11px] rounded-full bg-white ml-[3px]"></i></div></div>
    <div class="ml-[4px] mt-[6px] w-[212px] h-[32px] bg-white border border-dashed border-[#bbb] pl-[10px] leading-[31px]"><span data-w="188">Add drill-through fields here</span></div>
  </section>

  <!-- Data -->
  <section class="flex-1 min-w-0 overflow-hidden flex flex-col relative">
    <div class="h-[57px] pl-[10px] leading-[50px] text-[18px] font-semibold"><span data-w="42">Data</span></div>
    <div class="ml-[5px] w-[300px] h-[33px] border border-[#777] rounded-xs flex items-center pl-[9px] text-[15px] text-[#444]"><svg class="w-[19px] h-[18px]" viewBox="0 0 19 18" fill="none" stroke="#555" stroke-width="1.300"><circle cx="12" cy="6.500" r="5.800"/><path d="M8 10.500.7 17.500"/></svg><span class="ml-2 mt-[1px]" data-w="51">Search</span></div>
    <div id="fields" class="mt-[10px] flex flex-col text-[14px] text-[#3b3a39]"></div>
    <svg class="absolute left-[-8px] top-[390px] w-[259px] h-[401px] mix-blend-multiply" viewBox="0 0 777 1203"><path fill="#f9f700" fill-rule="evenodd" d="M235 858l55-18 90-6 70 4 70 12 25 20 18 30v55l-12 40-25 30-60 25-90 25-100 20-80 4-25-14-12-28 0-130 20-24 25-25zM225 935l60-22 70-12 90 2 65 12 18 24-22 34-50 26-60 24-90 10-80-5-30-10-8-20 0-30z"/></svg>
  </section>
</main>

<script>
// Stretches or tightens a run of text to its design width.
function fit() {
  const all = document.querySelectorAll('[data-w]');
  all.forEach(function (e) { e.style.letterSpacing = '0px'; });
  all.forEach(function (e) {
    const v = e.closest('[class*="vertical-rl"]');
    const r = e.getBoundingClientRect();
    e.dataset.n = v ? r.height : r.width;
  });
  all.forEach(function (e) {
    e.style.letterSpacing = ((+e.dataset.w - e.dataset.n) / e.textContent.length).toFixed(3) + 'px';
  });
}

document.getElementById('rows').innerHTML = ['DE','GA','KY','MD','NC','OH','PA','SC','TN','VA','WV'].map(function (s, i) {
  const cls = s === 'MD' ? 'h-[32px] leading-[34px] bg-[#d6d6d6] text-[#252423] border-l-2 border-black ml-[2px] pl-[2px]' : i % 2 ? 'h-[32px] leading-[34px] bg-[#f3f3f3] pl-[5px]' : 'h-[32px] leading-[34px] pl-[5px]';
  return '<div class="' + cls + '"><span class="font-light" data-w="' + ({DE:26,GA:29,KY:25,MD:34,NC:29,OH:31,PA:25,SC:25,TN:27,VA:26,WV:34})[s] + '">' + s + '</span></div>';
}).join('');

const roads = [
  'M24 135l55 60 45 30 35 50 30 60 35 55 0 40','M24 210l55-15 30 15','M165 285l85 5 10-60 5-60-20-20-30 25-5 50 30 60','M175 285l5 180-5 80-30 30-15 80-50 20 10 30 50 70 10 70-20 80-10 100','M24 410l60 10 6 55 70 30 60 40 60 5 90 25','M24 415l60 5 95-10 90 0 30 30 10 60 60 75',
  'M90 420l0 50M65 430l120 5 100 0 50-5','M245 435l-50 60-40 50-15 110','M270 440l-20 110-20 70-45 60-5 80 40 60 60 60 60 20','M295 440l40 80 35 60','M350 370l120-10 110-10M350 370l-40 40-40 20','M350 370l20-60 30-15 70 0 60-5 160 5 60-40 60-25','M465 80l-5 70 10 60 10 110-20 70-20 70-30 60-5 50','M465 155l50 50 15 90 0 70 30 20','M410 295l60 25 50 10 50 25','M470 320l-10 140M535 390l0 80-35 20-5 130','M440 465l60 20 80-10 60-15 20-30','M350 575l130-5 100-10 100-10 100-15',
  'M370 580l-95 20-90 30-100 40-60 45','M370 580l40-60 30-60','M370 580l60 20 45 30','M370 580l-10 50-60 50-20 60 0 100 70 40','M370 580l20 60 5 110','M90 665l60 30 130 10 120 0 80 10 110-20 70-10','M30 660l60 10 50-20 60-40 80-10','M90 670l-5 40 60 80-10 90-25 80','M475 625l20 60 10 60-10 100 20 45','M475 630l-60 40-20 40','M475 630l30-120 30-30','M540 405l-10 60M540 410l40-55','M580 560l0-80 0-50 80-10','M580 560l60-60 30-60M580 560l50 60 40 30 10 20 20 60','M660 420l5 50-5 50 10 100 0 70 35 60 0 60 15 30','M660 430l60-30 50-25 100 0 30-20 60-10','M765 375l5 80 5 80-10 60','M670 460l90-5 100 20 100 0 80 0','M680 620l90-15 20-20 80 0 50 5 60-20',
  'M900 590l-15 50-60 90-70 50-70 40-110 40-60 30-30 0-90-20-60 0','M700 745l60 0 60-10 80-10 50 50 50 0','M705 815l30 50 25 20 0 60','M24 820l70 10 60 0 60-20M205 810l150-40 50-30 90-30','M110 965l60-40 90-30 70-15M110 965l-86 20M110 965l60 40 60 40 90 55M110 965l15 100-10 60 10 90','M325 885l0 100-5 110 20 110','M325 885l60 10 30 60 15 20','M330 880l20-60-60-70M430 970l60-60 25-10','M430 970l-70 110-40 20-40 40-60 50','M430 970l30 70 25 35','M485 1075l-80 10-80 15M485 1075l70-50 60-40 70-30 30-20','M485 1075l-50 60-15 80M485 1075l40 75 0 65M485 1075l70 20 100 0 60-30 80-50 40-10','M620 985l40 60 70 40 60 60M645 960l-10-80-30-40M605 930l60 0 50-10','M720 960l-10 90-20 70M760 885l20 0 10 100 50 25M760 885l100 10 40 30 60 20M760 885l-50 60M850 895l60-70 30-60 5-110 50-15','M875 940l-30 60 0 20 70 10 5-30-45-60','M860 895l60-20 40-50 20-60',
  'M790 78l10 80 15 70M820 230l-60 60-60 70M820 215l70-20 80-15 60-10 80-40 60-50','M975 180l60 0 20 60-20 40-5 60 20 60 20 60-5 80','M820 235l-70 40-60 20M865 290l-10 10M920 280l20 15 15 50 50 40 70-10 60-30 30-20','M1030 330l10 80 30 50 40 10 40 0','M1205 78l5 90-20 60-10 60 10 50','M1205 165l50 10 30 30-20 90-10 110M1300 78l0 80 20 60 20 60','M1310 170l60-10 20 80M1440 80l5 30 20 25-10 30-10 50','M1525 78l0 40-60 10','M1280 210l60 60 30 60','M1374 348l-30-60-10-50M1340 280l40 60 0 70-40-30-40 0-30 40-30 25-60 20-35 30-25 30-30 15-30 30-30 30','M1270 400l0-100M1290 390l20 30 40-10 0-50M1360 400l30-20 30 30M1150 430l60-10 60-10 80 15','M1170 470l-60 0-80 0-50 0M1170 500l-70 10-60-5-60 10','M1040 450l60 20 20-5M1080 480l60-30 60-30','M1100 570l-60 30-40 40-45 5-55-60','M960 640l-40-50 20-50 40-20M990 640l5-60 0-40','M1000 650l-50 40 0 90-15 60M950 770l60 0 20 50 0 50-40 20 0 60M900 650l60 10','M970 550l30 30 40-5','M1130 535l40 10 0-20',
  'M740 1100l40 40-80 40-20 30M170 540l40 0M24 1100l60 90 120 0 60 20','M665 690l-80 10-90 20'
];
const minor = ['M330 430l60 20 60 10 60-30 40-10','M40 1100l80-5 80 5 0-130-70-80','M200 965l110 0 80 10-40 20M205 970l5 240M85 970l-30 80-25 60','M290 740l-10 100M1090 600l30 60 10 50-20 40-20 60M1060 620l50 80','M920 650l20 40-30 40M690 600l60 10M1120 500l40-20M600 590l60 60','M560 1010l-50 30M820 78l-20 100M130 890l60-10 20 60','M1180 450l80-5 90 0M690 930l50 40 50-30 40 10','M960 940l20 60M1100 470l20 90','M320 740l20 20 60 60 0 60M690 880l60 10M340 1000l30 10 40-20M700 1130l20-50M545 90l-5 30M690 610l-20 60 30 30 20-20 20-70M1010 830l0 60M1060 880l-60 20'];
const draw = list => list.map(d => '<path d="' + d + '"/>').join('');
document.getElementById('roads').innerHTML = '<g stroke="#cfa0d8" stroke-width="6">' + draw(minor) + '</g><g stroke="#f5eef5" stroke-width="2.500">' + draw(minor) + '</g>' +
  '<g stroke="#b391c6" stroke-width="9.500">' + draw(roads) + '</g><g stroke="#cdb0da" stroke-width="3.500">' + draw(roads) + '</g>' +
  '<g fill="#bb8fcc" opacity=".6"><circle cx="265" cy="385" r="14"/><circle cx="90" cy="668" r="13"/><circle cx="475" cy="628" r="15"/><circle cx="440" cy="463" r="11"/><circle cx="325" cy="883" r="11"/><circle cx="485" cy="1075" r="14"/><circle cx="430" cy="965" r="10"/><circle cx="555" cy="345" r="17"/><circle cx="665" cy="448" r="15"/><circle cx="770" cy="888" r="13"/><circle cx="720" cy="958" r="13"/><circle cx="1160" cy="490" r="23"/><circle cx="1360" cy="320" r="18"/><circle cx="1350" cy="385" r="15"/><circle cx="1075" cy="565" r="14"/><circle cx="980" cy="655" r="14"/><circle cx="1020" cy="820" r="13"/><circle cx="850" cy="298" r="12"/><circle cx="800" cy="235" r="10"/><circle cx="1072" cy="700" r="12"/></g>';

const labels = [
  [45,150,184,'WISCONSIN'],[405,279,168,'MICHIGAN'],[85,524,130,'ILLINOIS'],[298,622,139,'INDIANA'],[561,505,86,'OHIO'],[358,798,167,'KENTUCKY'],[245,921,172,'TENNESSEE'],[258,1190,160,'ALABAMA'],[713,648,84,'WEST'],[681,686,141,'VIRGINIA'],[797,798,143,'VIRGINIA'],[737,937,286,'NORTH CAROLINA'],[689,1046,109,'SOUTH'],[658,1083,164,'CAROLINA'],[796,489,239,'PENNSYLVANIA'],[935,326,170,'NEW YORK'],[1199,155,159,'VERMONT'],[1190,224,271,'NEW HAMPSHIRE'],[1244,360,96,'MASS.'],[1330,446,43,'R.I.'],[1132,594,51,'N.J.'],[1022,681,171,'DELAWARE'],[965,617,59,'MD.'],[1754,119,215,'NOVA SCOTIA']
];
const cities = [
  [171,326,172,'Milwaukee',34],[205,434,136,'Chicago',34],[522,392,111,'Detroit',34],[36,936,148,'Memphis',34],[745,278,150,'Toronto',40],[254,550,237,'Indianapolis',40],[485,607,197,'Columbus',40],[888,539,204,'Philadelphia',34],[1195,504,201,'New York',42],[1390,360,136,'Boston',40]
];
document.getElementById('labels').innerHTML =
  labels.map(l => '<text x="' + l[0] + '" y="' + l[1] + '" textLength="' + l[2] + '" lengthAdjust="spacingAndGlyphs">' + l[3] + '</text>').join('') +
  cities.map(l => '<text fill="#484848" x="' + l[0] + '" y="' + l[1] + '" textLength="' + l[2] + '" lengthAdjust="spacingAndGlyphs" font-size="' + l[4] + '">' + l[3] + '</text>').join('');

// Visual gallery, 24-unit icons
const B = 'fill="#83beec" stroke="#1b6fb5"', G = 'fill="#c8c6c4" stroke="#8a8886"', W = 'fill="#fff" stroke="#555"', N = 'fill="none" stroke="#3b3a39"';
const p = (a, d) => '<path ' + a + ' d="' + d + '"/>';
const axis = p(N, 'M1.500 .5v22.500h22');
const bolt = '<path fill="#fcd28a" stroke="#d9791b" d="M4 .7h6L8 6h3L2.500 14 4 8.500H1z"/>';
const funnel = p(W, 'M12 12.500h11L19.500 17v6.500h-3.500V17z');
const table = p(W, 'M1 1h22v22H1z') + p('fill="#bbb" stroke="none"', 'M1.500 1.500h21V5h-21z') + p(N + ' stroke-width="1"', 'M1 5.500h22M1 11h22M1 17h22M8.500 5.500V23M15.500 5.500V23');
const txt = (x, y, s, t, w, b) => '<text x="' + x + '" y="' + y + '" font-size="' + s + '" fill="#2b88c8" stroke="none" font-weight="' + b + '" textLength="' + w + '">' + t + '</text>';
const viz = [
  axis + p(W,'M2 4h5v5H2zM2 14h8v5H2z') + p(B,'M7 3.500h9V9H7z') + p(G,'M10 14h11v5H10z'),
  axis + p(W,'M5 16h5v7H5zM15.500 12h5v11h-5z') + p(B,'M5 8h5v8H5z') + p(G,'M15.500 3h5v9h-5z'),
  axis + p(B,'M2 2h21v4.500H2z') + p(W,'M2 6.500h12V11H2zM2 16h16v4.500H2z') + p(G,'M2 11h10v5H2z'),
  axis + p(B,'M3 2h4.500v21H3z') + p(W,'M7.500 10H12v13H7.500zM18 7h4.500v16H18z') + p(G,'M12.500 14H17v9h-4.500z'),
  axis + p(W,'M2 4h5v5H2zM2 14h11v5H2z') + p(B,'M6 3.500h15V9H6z') + p(G,'M13 14h8v5h-8z'),
  axis + p(W,'M5 18h5v5H5zM15.500 11h5v12h-5z') + p(B,'M5 3.500h5V18H5z') + p(G,'M15.500 3.500h5V11h-5z'),
  axis + p('fill="none" stroke="#2b88c8"','M2 19 14 7l4 4 5-6') + p(N,'M2 13l7-8 6 7 8-7'),
  p(G,'M10 23V12l8-11 5 11v11z') + p(W,'M1.500 15 9 3l9 14v6H1.500z') + p(B,'M1.500 14l5 4 7-8 9 13h-21z'),
  axis + p(W,'M2 12l6 8 7-7 8 4v6H2z') + p(B,'M2 4l6 7 7-8 8 4v10l-8-4-7 7-6-8z'),
  axis + p(B,'M1.500 3H23v13l-6-5-8 8-7.500-6z'),
  axis + p(B,'M5 4h5v13H5z') + p(G,'M15.500 3.500h5V12h-5z') + p(W,'M5 17h5v6H5zM15.500 12h5v11h-5z') + p(N,'M2 20 8 13l6 5 9-8'),
  axis + p(B,'M5 11h5v12H5z') + p(W,'M10 2h5v21h-5z') + p(G,'M15 7h5.500v16H15z') + p(N,'M2 20l6-7 6 5 9-8'),
  axis + p('fill="#fcd28a" stroke="#d9791b"','M2 13h5l5 4 5-4h6v6h-6l-5-2-5 2H2z') + p(G,'M2 4c6 0 6 4 10 4s5-4 11-4v6c-5 0-6 3-11 3S8 10 2 9z') + p(B,'M2 9c6 0 5 6 10 6s5-7 11-7v4c-5 0-6 8-11 8S8 13 2 13z'),
  axis + p(W,'M4 7h4.500v16H4zM18 2h4v21h-4z') + p(G,'M8.500 9H14v5H8.500z') + p(B,'M13 2h4v12h-4z'),
  p(B,'M1 2h22v6H1zM4.500 8h15v6h-15zM8 14h8.500v7H8z'),
  axis + '<g fill="#3b3a39"><path d="M17 2h4v4h-4zM5 16h4v4H5z"/><path fill="#83beec" d="M5 6h3.500v3.500H5zM11 10h3.500v3.500H11zM17 15h3.500v3.500H17z"/></g>',
  '<circle cx="12" cy="12" r="11" ' + W + '/>' + p(B,'M12 1a11 11 0 0 1 8 19l-8-8z'),
  '<circle cx="12" cy="12" r="8" fill="none" stroke="#83beec" stroke-width="6"/>' + p('fill="none" stroke="#f4f4f4" stroke-width="5"','M4 10.500A8 8 0 0 1 11.500 4') + '<circle cx="12" cy="12" r="11" fill="none" stroke="#1b6fb5"/><circle cx="12" cy="12" r="5" fill="#fff" stroke="#1b6fb5"/>' + p(N,'M12 1v6M1 11h6'),
  p(B,'M1 1h11v22H1zM1 13h11') + p(W,'M12 1h11v6H12zM12 7h5v16h-5zM17 7h6v8h-6zM17 15h6v8h-6z'),
  '<circle cx="13" cy="10" r="7" fill="#fff" stroke="#555"/>' + p('fill="#3f9a52"','M9 6l4-2 2 3-4 4zM13 12l5-4v5l-4 3z') + p(N,'M13 1a9 9 0 1 0 9 13M12 19v4M6 23h13M5 2C0 8 2 17 9 20'),
  p(G,'M10 3l5 2 8-3v10H11z') + p(G,'M2 11h9l2 11-7-3z') + p(B,'M1 3l5 1 5-2v6l1 5-9 1-2-6z') + p(B,'M12 12h11l-2 5-8 6-2-6z'),
  p('fill="#3a9bc8"','M15 0 2 24l12-6z') + p('fill="#1877b8"','M15 0l6 24-7-6z') + p('fill="#6cc0de"','M15 0 2 24l9-9z'),
  p(B,'M1 17a11 11 0 0 1 22 0h-5a6 6 0 0 0-12 0z') + p(W,'M1 17a11 11 0 0 1 4-8l3.500 4A6 6 0 0 0 6 17z') + p('fill="#333"','M17 9l-3 8a2 2 0 0 1-3-2z'),
  p(W,'M1 3.500h22v17H1z') + txt(3,14.500,11,'123',18,400) + p('stroke="#888"','M3 17.500h18'),
  p(W,'M1 1h22v22H1z') + p('stroke="#888"','M4.500 4v16M7 10h8M7 18h8') + p('stroke="#2b88d8" stroke-width="2"','M7 7h13M7 14.500h13'),
  p(W,'M1 2.500h22v19H1z') + p('fill="#3f9a52"','M4 13l4-7 4 7z') + p('fill="#d13438"','M12.500 6h8l-4 7z') + p('stroke="#888"','M3.500 17.500h17'),
  p(W,'M10 22H1V1h22v9') + p('fill="#bbb"','M1.500 1.500h21V5h-21z') + p(G,'M5 9h3v3H5zM5 15h3v3H5z') + funnel,
  table,
  table + p('fill="#5ba5de"','M15.500 6H23v16.500h-7.500zM1.500 17H15v5.500H1.500z') + p('stroke="#1b6fb5" stroke-width="1" fill="none"','M15.500 6v17M15.500 11H23M1 17h22M8.500 17v6'),
  txt(5,19,19,'R',13,700),
  txt(0,17,20,'Py',23,700),
  axis + p('stroke="#2b88d8"','M3 4.500h14') + '<circle cx="19" cy="4.500" r="2.800" ' + B + '/>' + p('stroke="#888"','M3 11h10M3 16h6') + p(G,'M13 9.500h3v3h-3zM8 14.500h3v3H8z'),
  p(N,'M8 12h5M13 3v18h3M13 12h3M13 3h3') + p(B,'M1 9.500h7v5H1zM15 1.500h8v5h-8zM15 9.500h8v5h-8zM15 17.500h8v5h-8z'),
  p('fill="#fff" stroke="#1b6fb5"','M1 2.500h22V17H10l-5 5v-5H1z'),
  p(W,'M4 5V1h11l5 5v17H4V12') + p(N,'M15 1v5h5') + p('stroke="#2b88d8"','M8 11h8M10 16h7') + '<circle cx="4" cy="9" r="2.300" ' + B + '/>',
  p(N,'M6 4H1c0 6 2 8 6 8M18 4h5c0 6-2 8-6 8') + p(W,'M6 2h12c0 8-1 12-4 13v5h-4v-5C7 14 6 10 6 2z') + p(B,'M6 1h12v3H6zM6 20h12v3H6z'),
  p(W,'M3 1h12l6 6v16.500H3z') + p(N,'M15 1v6h6') + p('fill="#333"','M6 14h3v7H6zM10.500 17h3v4h-3zM15 11h3v10h-3z'),
  p(W,'M3 4.500h20v17H2V12') + txt(6,16,11,'123',15,400) + p('stroke="#888"','M4 19h16') + bolt,
  p(W,'M10 22H2V12M9 2h14v8') + p('fill="#bbb"','M10 2.500h12.500V6H10z') + p(G,'M5 16h3v3H5z') + funnel + bolt,
  '<circle cx="12" cy="12" r="11" fill="#e8f1f5" stroke="#aaa"/><circle cx="12" cy="12" r="8.500" fill="#1877b8"/>' + p('fill="#3f9a52"','M5 8l5-3 2 4-5 4zM13 12l6-2-1 7-5 1zM7 16l3-1 1 4zM15 5l4 3-3 1z') + p('stroke="#dcebf2" fill="none" stroke-width="1"','M3 10l18-3M4 16l17-3M8 3c-2 6 0 12 3 18M14 3c2 6 3 12 1 18'),
  p('fill="#fff" stroke="#8a3fa0"','M7 1.500h4L15.500 7 12 12l3.500 5-4.500 5.500H7L1 12z') + p('fill="#fff" stroke="#8a3fa0"','M13 1.500h4L23 12l-6 10.500h-4L8.500 17l3.500-5-3.500-5z') + p('fill="none" stroke="#8a3fa0"','M12 2.500 8.500 7 12 12l3.500-5zM12 12l-3.500 5 3.500 5 3.500-5z'),
  p('fill="#fff" stroke="#1b7fd4"','M1 2h15l7 10-7 10H1l8-10zM9 12l7-10M4 22 17 4M9 22l11-14')
];
document.getElementById('viz').innerHTML = viz.map(function (s, i) {
  const c = i === 27 ? 'size-[30px] -m-px border border-[#605e5c] bg-[#e1dfdd] flex items-center justify-center' : 'size-[28px] flex items-center justify-center';
  return '<div class="size-[35px] p-[2px]"><div class="' + c + '"><svg class="size-[24px] shrink-0" viewBox="0 0 24 24" fill="none" stroke-width="1.400">' + s + '</svg></div></div>';
}).join('');

const I = {
  calc: '<rect x="1.500" y="1" width="14" height="16" rx="2" stroke-width="1.700"/><rect x="4.500" y="3.500" width="8" height="3.500" rx="1"/><path d="M4 10h9M4 13.500h9" stroke-width="2.200" stroke-dasharray="2.200 1.200"/>',
  fx: '<path d="M5 15.500H3c-1 0-1.500-.5-1.500-1.500V3c0-1 .5-1.500 1.500-1.500h11c.8 0 1 .5 1 1.500v2M5 1.500v14M10 1.500v4M5 6h3"/><path d="M13 5.500c-4-1-2 10-6.500 11M8 9.500h5M12.500 12l5 5M17.500 12l-5 5" stroke-width="1.600"/>',
  sumcol: '<path d="M5 15.500H3c-1 0-1.500-.5-1.500-1.500V3c0-1 .5-1.500 1.500-1.500h11c.8 0 1 .5 1 1.500v2M5 1.500v14M5 6h10M5 11h4M10 1.500V6"/><path d="M17 10V8.500h-7l4 4.300-4 4.200h7v-1.500" stroke-width="1.500"/>',
  date: '<rect x="1.500" y="1.500" width="14" height="14" rx="2"/><path d="M1.500 5.500h14" stroke-width="1.600"/><path d="M7 9h6M4.500 12h6" stroke-width="1.800" stroke-dasharray="1.800 1.200"/>',
  globe: '<circle cx="8.500" cy="8.500" r="7"/><ellipse cx="8.500" cy="8.500" rx="3.500" ry="7"/><path d="M2.500 5.500h12M2.500 11.500h12"/>',
  sum: '<path d="M14 3V1.500H2.500l6.500 7-6.500 7H14.500V14"/>',
  id: '<rect x=".8" y="2.500" width="16" height="11.500" rx="1.500" stroke-width="1.800"/><path d="M3.500 11.500h5v-2h-5zM4.700 5.500h2.600V8H4.700z" fill="#252423" stroke="none"/><path d="M10 7h4.500M10 10h4.500" stroke-width="1.600"/>',
  grid: '<rect x="1.500" y="1.500" width="14" height="14" rx="2"/><path d="M6 1.500v14M11 1.500v14M1.500 6h14M1.500 11h14"/>'
};
const F = [['Average Selling Area S','calc',148],['Chain','',37],['City','fx',26],['Count of OpenDate','calc',130],['DistrictID','',61],['DM','',24],['DM_Pic','',50],['Name','',40],['New Stores','calc',75],['New Stores Target','calc',120],['Open Month','fx',85],['Open Month No','sumcol',109],['Open Store Count','calc',120],['Open Year','sumcol',69],['OpenDate','date',68],['PostalCode','globe',74],['SellingAreaSize','sum',101],['Store Type','fx',70],['StoreNumber','sum',89],['StoreNumberName','id',129],['Territory','globe',55],['Total Stores','calc',76]];
const ic = k => '<svg class="w-[18px] h-[18px] shrink-0" viewBox="0 0 18 18" fill="none" stroke="#323130" stroke-width="1.300">' + (I[k] || '') + '</svg>';
const chev = '<svg class="w-[9px] h-[15px] shrink-0" viewBox="0 0 9 15" fill="none" stroke="#555" stroke-width="1.200"><path d="M1 .7l7 6.800-7 6.800"/></svg>';
document.getElementById('fields').innerHTML = F.map(function (f) {
  const on = f[0] === 'Territory';
  const box = on ? '<div class="size-[15px] rounded-xs bg-[#117865] shrink-0"><svg class="size-[15px]" viewBox="0 0 15 15"><path d="M2.500 7.500l3.500 3.500 7-7" fill="none" stroke="#fff" stroke-width="1.600"/></svg></div>' : '<div class="size-[15px] rounded-xs border border-[#797775] shrink-0"></div>';
  return '<div class="h-[30px] flex items-center pl-[38px]"><div class="w-[17px] shrink-0 flex">' + (f[1] === 'date' ? chev : '') + '</div>' + box + '<div class="ml-[9px] w-[23px] shrink-0">' + ic(f[1]) + '</div><span data-w="' + f[2] + '">' + f[0] + '</span></div>';
}).join('') + '<div class="h-[30px] flex items-center pl-[19px]">' + chev + '<div class="ml-[7px] w-[24px]">' + ic('grid') + '</div><span data-w="32">Time</span></div>';

fit();
addEventListener('load', fit);
document.fonts.ready.then(fit);
new MutationObserver(fit).observe(document.head, { childList: true, subtree: true });
requestAnimationFrame(fit);
[30, 100, 250, 500].forEach(function (t) { setTimeout(fit, t); });
</script>
</body>
</html>
